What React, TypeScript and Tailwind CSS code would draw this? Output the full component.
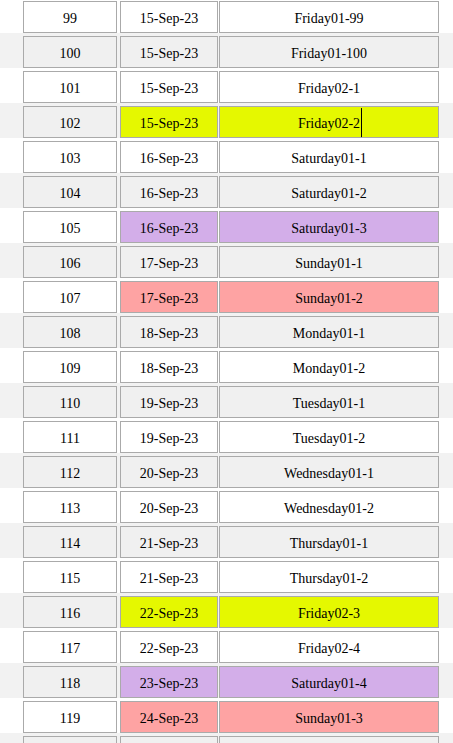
import React from "react";

type Row = { n: number; d: string; name: string; c?: "y" | "p" | "r" };

const rows: Row[] = [
  { n: 99, d: "15-Sep-23", name: "Friday01-99" },
  { n: 100, d: "15-Sep-23", name: "Friday01-100" },
  { n: 101, d: "15-Sep-23", name: "Friday02-1" },
  { n: 102, d: "15-Sep-23", name: "Friday02-2", c: "y" },
  { n: 103, d: "16-Sep-23", name: "Saturday01-1" },
  { n: 104, d: "16-Sep-23", name: "Saturday01-2" },
  { n: 105, d: "16-Sep-23", name: "Saturday01-3", c: "p" },
  { n: 106, d: "17-Sep-23", name: "Sunday01-1" },
  { n: 107, d: "17-Sep-23", name: "Sunday01-2", c: "r" },
  { n: 108, d: "18-Sep-23", name: "Monday01-1" },
  { n: 109, d: "18-Sep-23", name: "Monday01-2" },
  { n: 110, d: "19-Sep-23", name: "Tuesday01-1" },
  { n: 111, d: "19-Sep-23", name: "Tuesday01-2" },
  { n: 112, d: "20-Sep-23", name: "Wednesday01-1" },
  { n: 113, d: "20-Sep-23", name: "Wednesday01-2" },
  { n: 114, d: "21-Sep-23", name: "Thursday01-1" },
  { n: 115, d: "21-Sep-23", name: "Thursday01-2" },
  { n: 116, d: "22-Sep-23", name: "Friday02-3", c: "y" },
  { n: 117, d: "22-Sep-23", name: "Friday02-4" },
  { n: 118, d: "23-Sep-23", name: "Saturday01-4", c: "p" },
  { n: 119, d: "24-Sep-23", name: "Sunday01-3", c: "r" },
];

function colorClass(c: Row["c"], gray: boolean) {
  if (c === "y") return "bg-[#e5f800]";
  if (c === "p") return "bg-[#d3aee9]";
  if (c === "r") return "bg-[#fea3a3]";
  return gray ? "bg-[#f0f0f0]" : "bg-white";
}

const cellBase =
  "h-[32px] pt-[4px] border border-[#aaaaaa] flex items-center justify-center leading-none font-['Liberation_Serif','Times_New_Roman',serif] text-[14px] text-black";

export default function App() {
  return (
    <div className="w-[453px] h-[743px] overflow-hidden bg-white text-black font-['Liberation_Serif','Times_New_Roman',serif]">
      <div className="-mt-[2px] flex flex-col">
        {rows.map((r) => {
          const gray = r.n % 2 === 0;
          const bandCls = gray ? "bg-[#f2f2f2]" : "bg-white";
          const cc = colorClass(r.c, gray);
          return (
            <div key={r.n} className={`flex h-[35px] shrink-0 pt-[3px] pl-[23px] ${bandCls}`}>
              <div className={`w-[94px] mr-[3px] ${cellBase} ${gray ? "bg-[#f0f0f0]" : "bg-white"}`}>
                {r.n}
              </div>
              <div className={`w-[98px] mr-px ${cellBase} ${cc}`}>{r.d}</div>
              <div className={`w-[220px] ${cellBase} ${cc}`}>
                <span className="relative">
                  {r.name}
                  {r.n === 102 && (
                    <span className="absolute left-full ml-px top-1/2 -translate-y-[55%] w-px h-[29px] bg-black" />
                  )}
                </span>
              </div>
            </div>
          );
        })}
        <div className="flex h-[35px] shrink-0 pt-[3px] pl-[23px] bg-[#f2f2f2]">
          <div className="w-[94px] mr-[3px] h-[32px] border border-[#aaaaaa] bg-[#f0f0f0]" />
          <div className="w-[98px] mr-px h-[32px] border border-[#aaaaaa] bg-[#f0f0f0]" />
          <div className="w-[220px] h-[32px] border border-[#aaaaaa] bg-[#f0f0f0]" />
        </div>
      </div>
    </div>
  );
}
